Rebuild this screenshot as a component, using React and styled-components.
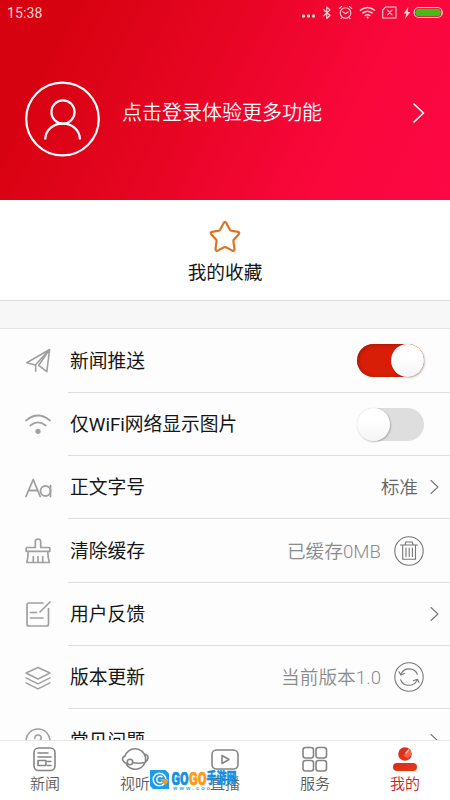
import React, { useState } from 'react'
import styled, { createGlobalStyle } from 'styled-components'

const GlobalStyle = createGlobalStyle`
  * {
    box-sizing: border-box;
  }
  body {
    margin: 0;
    font-family: Roboto, 'Noto Sans CJK SC', sans-serif;
    color: #161616;
  }
  svg {
    display: block;
    flex-shrink: 0;
  }
`

const Root = styled.div`
  width: 450px;
  height: 800px;
  display: flex;
  flex-direction: column;
  overflow: hidden;
  background: #fdfdfd;
`

const Header = styled.header`
  height: 200px;
  flex-shrink: 0;
  background: linear-gradient(117deg, #d6020f 12%, #e60522 42%, #fa073c 75%, #fd0745 100%);
`

const StatusBar = styled.div`
  height: 26px;
  padding: 0 7px;
  display: flex;
  align-items: center;
  justify-content: space-between;
  color: #ffd3d6;
`

const Clock = styled.span`
  font-size: 14px;
  line-height: 26px;
  letter-spacing: 0.1px;
`

const Profile = styled.div`
  height: 186px;
  padding: 0 25px;
  display: flex;
  align-items: center;
  color: #fff;
`

const LoginText = styled.div`
  flex: 1;
  margin: -15px 0 0 22px;
  font-size: 20px;
  line-height: 30px;
  font-weight: 350;
  font-family: 'Noto Sans CJK SC', sans-serif;
`

const ProfileArrow = styled.div`
  margin-top: -12px;
`

const Favorite = styled.section`
  height: 101px;
  flex-shrink: 0;
  padding-top: 20px;
  display: flex;
  flex-direction: column;
  align-items: center;
  gap: 8px;
  font-size: 18.7px;
  line-height: 22px;
  background: #fff;
  border-bottom: 1px solid #dedede;
`

const Divider = styled.div`
  height: 28px;
  flex-shrink: 0;
  background: #f7f7f7;
  border-bottom: 1px solid #e2e2e2;
`

const List = styled.main`
  flex: 1;
  min-height: 0;
  padding-top: 0.6px;
  overflow: hidden;
`

const Row = styled.div`
  height: 63.3px;
  padding-left: 24px;
  display: flex;
  gap: 16px;
`

const RowIcon = styled.div`
  width: 28px;
  display: flex;
  align-items: center;
  justify-content: center;
  color: #a0a0a0;
`

const RowBody = styled.div`
  flex: 1;
  padding: 0 ${({ $end }) => $end}px 0 2px;
  display: flex;
  align-items: center;
  border-bottom: 1px solid #dfdfdf;
`

const RowTitle = styled.div`
  flex: 1;
  padding-top: 2px;
  font-size: 18.75px;
  line-height: 28px;
`

const RowValue = styled.div`
  margin-right: ${({ $gap }) => $gap}px;
  padding-top: 2px;
  font-size: 18.7px;
  line-height: 28px;
  font-weight: 350;
  color: ${({ $dark }) => ($dark ? '#666' : '#8b8b8b')};
`

const Toggle = styled.button`
  width: 67px;
  height: 33px;
  padding: 0;
  border: 0;
  border-radius: 17px;
  display: flex;
  justify-content: ${({ $on }) => ($on ? 'flex-end' : 'flex-start')};
  background: ${({ $on }) => ($on ? '#d81e06' : '#dedede')};
  box-shadow: ${({ $on }) => ($on ? 'inset 1px 1px 4px #a01808' : 'none')};
`

const Knob = styled.span`
  width: 33px;
  height: 33px;
  border-radius: 50%;
  background: linear-gradient(#fff 40%, #f4f4f4);
  box-shadow: 1px 1px 2px rgba(0, 0, 0, 0.22), 0 0 1px rgba(0, 0, 0, 0.2);
`

const TabBar = styled.nav`
  position: relative;
  height: 60px;
  flex-shrink: 0;
  display: flex;
  background: #fff;
  border-top: 1px solid #e8e8e8;
`

const Tab = styled.div`
  flex: 1;
  padding-top: 5px;
  display: flex;
  flex-direction: column;
  align-items: center;
  gap: 3px;
  font-size: 15px;
  line-height: 18px;
  font-weight: 350;
  color: ${({ $active }) => ($active ? '#c5281c' : '#5c5c5c')};
  svg {
    color: #858585;
  }
`

const Watermark = styled.div`
  position: absolute;
  left: 149px;
  top: 28px;
`

const Line = ({ w = 26, h = 26, sw = 1.4, children }) => (
  <svg
    width={w}
    height={h}
    viewBox={`0 0 ${w} ${h}`}
    fill="none"
    stroke="currentColor"
    strokeWidth={sw}
    strokeLinecap="round"
    strokeLinejoin="round"
  >
    {children}
  </svg>
)

const StatusIcons = () => (
  <Line w={143} h={18} sw={1.1}>
    <g fill="currentColor" stroke="none">
      <circle cx="3.5" cy="12" r="1.7" />
      <circle cx="8.5" cy="12" r="1.7" />
      <circle cx="13.5" cy="12" r="1.7" />
    </g>
    <path d="M23.5 5.5l6.500 6-3.300 3V3l3.300 3-6.500 6" />
    {/* alarm */}
    <circle cx="45.5" cy="9" r="5.3" />
    <path d="M39.3 4.5l2.3-2M51.7 4.5l-2.3-2M42.8 7.8l2.7 2 2.7-2M42 13.5l-1 1.2M49 13.5l1 1.2" />
    {/* wifi */}
    <path d="M60.5 6.2q7-5.4 14 0M62.9 8.9q4.6-3.5 9.2 0M65.2 11.5q2.3-1.7 4.6 0" strokeWidth="1.5" />
    <circle cx="67.5" cy="13.6" r="1.1" fill="currentColor" stroke="none" />
    {/* no sim */}
    <path d="M85.5 3H96v11H82.7V6z" />
    <path d="M87.5 6.2l4.5 4.6M92 6.2l-4.5 4.6" />
    <path d="M108.3 3l-4.6 6.5h2.6L105 15l5.3-7h-2.6z" fill="currentColor" stroke="none" />
    {/* battery */}
    <rect x="114.2" y="3.5" width="27.8" height="10" rx="4.5" />
    <rect x="115.5" y="4.7" width="25.2" height="7.6" rx="3.5" fill="#45bb16" stroke="none" />
    <path d="M143 7v3" />
  </Line>
)

const Avatar = () => (
  <Line w={75} h={76} sw={2.2}>
    <circle cx="37.5" cy="38" r="36.3" />
    <circle cx="38" cy="31" r="11.6" />
    <path d="M20.2 58.500C20.500 48.500 28.500 42.600 37.700 42.600s17 5.900 17.300 15.900" strokeLinecap="butt" />
  </Line>
)

const Star = () => (
  <svg width="32" height="34" viewBox="0 0 32 34" fill="none" stroke="#dc7422" strokeWidth="2.200" strokeLinejoin="round">
    <path d="M14.7 2.9q1.3-2.2 2.6 0l3.6 6.800q.4.700 1.200.900l7 1.300q2 .600.700 2.300l-5 5.500q-.500.600-.400 1.400l1.100 8q0 2.300-2.200 1.500L17 27.300q-1-.500-2 0l-6.300 3.300q-2.200.800-2.200-1.500l1.100-8q.100-.800-.400-1.400l-5-5.500q-1.300-1.700.700-2.300l7-1.300q.800-.200 1.200-.900z" />
  </svg>
)

const Plane = () => (
  <Line sw={1.600}>
    <path d="M24.600 1.500L1.800 14.700 10.300 17zM10.700 17.800v5.400M13.700 17.300l8.100 6.400 2.800-22.200-10.900 15.800" />
  </Line>
)

const Wifi = () => (
  <Line sw={1.7}>
    <path d="M1 8.500q12-10 24 0M5.300 13.500q7.700-6.300 15.400 0" />
    <circle cx="13" cy="19.300" r="2.600" fill="currentColor" stroke="none" />
  </Line>
)

const FontSize = () => (
  <Line w={28} h={26} sw={1.8}>
    <path d="M2 21.500L9.200 4.500l7 17M4.600 15.500h9.200M26.500 10.500v11" />
    <circle cx="21.500" cy="16" r="5" />
  </Line>
)

const Brush = () => (
  <Line sw={1.7}>
    <path d="M10.300 9.500V3.500q0-2.500 2.700-2.500t2.700 2.500v6h8.300q.8 0 .8.800v3H1.200v-3q0-.8.800-.8zM3.200 13.300q0 6-1.400 11.200h22.500q-1.500-5-1.500-11.200M8.300 24.500v-6M13 24.500v-6M17.700 24.500v-6" />
  </Line>
)

const Edit = () => (
  <Line sw={1.7}>
    <path d="M18 2H4Q2 2 2 4v19q0 2 2 2h17.500q2 0 2-2V7.500M25 1L15 11M5.500 11.500h6M5.500 17h12.500" />
  </Line>
)

const Layers = () => (
  <Line sw={1.4}>
    <path d="M13 2.500l12 5.500-12 6-12-6zM1 12.800l12 6 12-6M1 17.800l12 6 12-6" />
  </Line>
)

const Question = () => (
  <Line sw={1.6}>
    <circle cx="13" cy="13" r="12" />
    <path d="M9.800 10.500q0-3.500 3.200-3.500t3.200 3q0 1.700-1.700 2.800T13 16M13 19v.3" />
  </Line>
)

const Arrow = () => (
  <Line w={9} h={16} sw={1.1}>
    <path d="M1 1.500l7 6.500-7 6.500" stroke="#777" />
  </Line>
)

const Trash = () => (
  <Line w={30} h={30} sw={1.1}>
    <g stroke="#777">
      <circle cx="15" cy="15" r="14.2" />
      <path d="M6.500 9h17M8.700 9v14.300h12.800V9M11 8.800l.8-2.800h6.500l.8 2.800M12 12v8.500M15.200 12v8.500M18.400 12v8.500" />
    </g>
  </Line>
)

const Refresh = () => (
  <Line w={30} h={30} sw={1.1}>
    <g stroke="#777">
      <circle cx="15" cy="15" r="14.2" />
      <path d="M23.400 12.300a9 9 0 0 0-16.400-.3M5 9.800l1.800 3.200 4-1.800M6.600 17.700a9 9 0 0 0 16.600.2M25 20.500l-1.500-3.300-4.200 1.500" />
    </g>
  </Line>
)

const NewsIcon = () => (
  <Line sw={1.6}>
    <rect x="2" y="2" width="21" height="22.5" rx="4.5" />
    <path d="M6 7h10M6 11h13M15.500 15.500h3.500M15.500 19.500h3.500" />
    <rect x="6" y="14.5" width="8" height="5" />
  </Line>
)

const PlanetIcon = () => (
  <Line w={28} h={26} sw={1.6}>
    <path d="M3.800 10.500A10.700 10.700 0 0 1 24.500 11M5.600 18.800a10.500 10.500 0 0 0 17.900-1.200M4.200 9.500Q.5 12 2 14.500q1 2.200 4.500 3.500M23.500 8q3.500 1 3.500 3.500 0 2.800-3 4.800M11.700 16.500q6 1.500 12.800-.2M24.500 11v5" />
    <circle cx="9" cy="16" r="2.7" />
  </Line>
)

const LiveIcon = () => (
  <Line w={28} h={26} sw={1.6}>
    <rect x="1" y="4" width="26" height="19" rx="4.5" />
    <path d="M11 9.500v8l7-4z" />
  </Line>
)

const ServiceIcon = () => (
  <Line sw={1.6}>
    <rect x="1" y="1.500" width="10.500" height="10.500" rx="2.5" />
    <rect x="14" y="1.500" width="10.500" height="10.500" rx="2.5" />
    <rect x="1" y="14.500" width="10.500" height="10.500" rx="2.5" />
    <rect x="14" y="14.500" width="10.500" height="10.500" rx="2.5" />
  </Line>
)

const MineIcon = () => (
  <svg width="26" height="26" viewBox="0 0 26 26">
    <defs>
      <linearGradient id="mine" x1="0" y1="0" x2="1" y2="1">
        <stop offset="0" stopColor="#d92a20" />
        <stop offset="1" stopColor="#e83c10" />
      </linearGradient>
    </defs>
    <circle cx="13" cy="8" r="6.8" fill="url(#mine)" />
    <path d="M11.500 9.500l6-6.200q3.200 3.200.6 7.200-3 2.800-6.600-1z" fill="#f4634a" />
    <path d="M13.500 7.500l3.500-4" stroke="#ffc9bc" strokeWidth="1.2" />
    <rect x="1" y="17" width="24" height="8" rx="4" fill="url(#mine)" />
  </svg>
)

const WatermarkLogo = () => (
  <svg width="90" height="24" viewBox="0 0 90 24">
    <path d="M1 1h15.500L20 4.500V20H4L1 17z" fill="#1d9cec" />
    <circle cx="10.500" cy="10.500" r="6.300" fill="none" stroke="#fff" strokeWidth="1.5" />
    <path d="M13.500 8.300a3.300 3.300 0 1 0 0 4.500" fill="none" stroke="#fff" strokeWidth="1.4" />
    <path d="M10 10h9.500q-.8 4.800-4 6.500l-1-3.800z" fill="#f79b22" />
    <g fontFamily="Roboto, sans-serif" fontWeight="900" fontSize="19" strokeWidth="0.7">
      <text x="22.500" y="15.5" textLength="17" lengthAdjust="spacingAndGlyphs" fill="#158fe0" stroke="#158fe0">GO</text>
      <text x="40" y="15.5" textLength="17.500" lengthAdjust="spacingAndGlyphs" fill="#ff9914" stroke="#ff9914">GO</text>
    </g>
    <text
      x="57.500"
      y="14"
      textLength="30"
      lengthAdjust="spacingAndGlyphs"
      fill="#168fe2"
      stroke="#168fe2"
      strokeWidth="0.4"
      fontFamily="'Noto Sans CJK SC', sans-serif"
      fontWeight="900"
      fontSize="14.5"
    >
      手游网
    </text>
    <text x="24" y="20.5" textLength="37" fill="#48a9e8" fontFamily="Roboto, sans-serif" fontSize="6" fontWeight="700">
      www.coo
    </text>
  </svg>
)

const tabs = [
  { title: '新闻', icon: <NewsIcon /> },
  { title: '视听', icon: <PlanetIcon /> },
  { title: '直播', icon: <LiveIcon /> },
  { title: '服务', icon: <ServiceIcon /> },
  { title: '我的', icon: <MineIcon />, active: true },
]

function SettingRow({ icon, title, end = 11, children }) {
  return (
    <Row>
      <RowIcon>{icon}</RowIcon>
      <RowBody $end={end}>
        <RowTitle>{title}</RowTitle>
        {children}
      </RowBody>
    </Row>
  )
}

export default function App() {
  const [push, setPush] = useState(true)
  const [wifiOnly, setWifiOnly] = useState(false)

  return (
    <Root>
      <GlobalStyle />
      <Header>
        <StatusBar>
          <Clock>15:38</Clock>
          <StatusIcons />
        </StatusBar>
        <Profile>
          <Avatar />
          <LoginText>点击登录体验更多功能</LoginText>
          <ProfileArrow>
            <Line w={13} h={22} sw={1.7}>
              <path d="M2 2l9.500 9L2 20" />
            </Line>
          </ProfileArrow>
        </Profile>
      </Header>
      <Favorite>
        <Star />
        我的收藏
      </Favorite>
      <Divider />
      <List>
        <SettingRow icon={<Plane />} title="新闻推送" end={26}>
          <Toggle $on={push} onClick={() => setPush(!push)}>
            <Knob />
          </Toggle>
        </SettingRow>
        <SettingRow icon={<Wifi />} title="仅WiFi网络显示图片" end={26}>
          <Toggle $on={wifiOnly} onClick={() => setWifiOnly(!wifiOnly)}>
            <Knob />
          </Toggle>
        </SettingRow>
        <SettingRow icon={<FontSize />} title="正文字号">
          <RowValue $gap={12} $dark>标准</RowValue>
          <Arrow />
        </SettingRow>
        <SettingRow icon={<Brush />} title="清除缓存" end={26}>
          <RowValue $gap={13}>已缓存0MB</RowValue>
          <Trash />
        </SettingRow>
        <SettingRow icon={<Edit />} title="用户反馈">
          <Arrow />
        </SettingRow>
        <SettingRow icon={<Layers />} title="版本更新" end={26}>
          <RowValue $gap={13}>当前版本1.0</RowValue>
          <Refresh />
        </SettingRow>
        <SettingRow icon={<Question />} title="常见问题">
          <Arrow />
        </SettingRow>
      </List>
      <TabBar>
        {tabs.map((tab) => (
          <Tab key={tab.title} $active={tab.active}>
            {tab.icon}
            {tab.title}
          </Tab>
        ))}
        <Watermark>
          <WatermarkLogo />
        </Watermark>
      </TabBar>
    </Root>
  )
}
